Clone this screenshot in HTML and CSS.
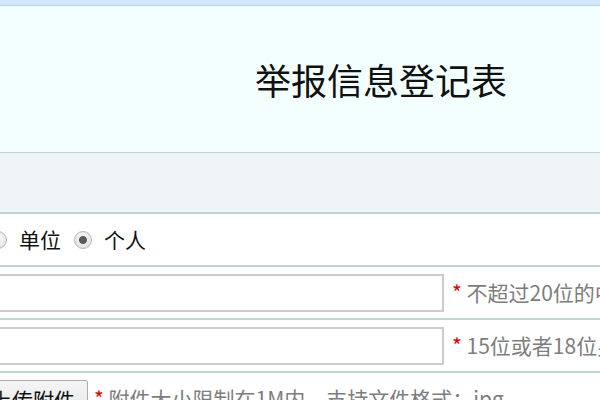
FILE: index.html
```html
<!DOCTYPE html>
<html lang="zh-CN">
<head>
<meta charset="utf-8">
<title>举报信息登记表</title>
<link rel="stylesheet" href="styles.css">
</head>
<body>
<div class="topbar"></div>
<header class="header">
  <h1 class="title">举报信息登记表</h1>
</header>
<div class="band"></div>
<form class="form">
  <div class="row">
    <div class="field radios">
      <label class="opt"><input type="radio" name="type" class="radio"><span>单位</span></label>
      <label class="opt"><input type="radio" name="type" class="radio" checked><span>个人</span></label>
    </div>
  </div>
  <div class="row">
    <div class="field">
      <input type="text" class="text">
      <span class="hint"><span class="star">*</span> 不超过20位的中文字符</span>
    </div>
  </div>
  <div class="row">
    <div class="field">
      <input type="text" class="text">
      <span class="hint"><span class="star">*</span> 15位或者18位身份证号码</span>
    </div>
  </div>
  <div class="row last">
    <div class="field">
      <button type="button" class="upload">上传附件</button>
      <span class="hint"><span class="star">*</span> 附件大小限制在1M内，支持文件格式：jpg</span>
    </div>
  </div>
</form>
</body>
</html>
```

FILE: styles.css
```css
html, body {
  margin: 0;
  padding: 0;
  width: 600px;
  height: 400px;
  overflow: hidden;
  background: #ffffff;
  font-family: "Noto Sans CJK SC", "Noto Sans", sans-serif;
}

.topbar {
  height: 5px;
  background: #d3e7fb;
  border-bottom: 1px solid #b1d4ee;
}

.header {
  height: 147px;
  background: #f3ffff;
  border-bottom: 1px solid #c2d2d4;
  display: flex;
  align-items: center;
  padding-left: 255px;
  box-sizing: border-box;
}

.title {
  margin: 0;
  font-size: 36px;
  font-weight: normal;
  color: #111111;
  line-height: 1;
  letter-spacing: 0;
}

.band {
  height: 59px;
  background: #eff4f7;
  border-bottom: 2px solid #bcd5d2;
}

.form {
  margin: 0;
}

.row {
  height: 51px;
  border-bottom: 2px solid #bdd6d2;
  display: flex;
  align-items: center;
  overflow: hidden;
  white-space: nowrap;
}

.row.last {
  height: 40px;
  align-items: flex-start;
  padding-top: 7px;
  border-bottom: none;
}

.field {
  display: flex;
  align-items: center;
  margin-left: -120px;
  font-size: 21px;
  color: #111111;
}

.radios {
  padding-left: 109px;
}

.opt {
  display: flex;
  align-items: center;
  margin-right: 13px;
}

.opt span {
  margin-left: 12px;
  line-height: 1;
}

.radio {
  appearance: none;
  -webkit-appearance: none;
  margin: 0;
  width: 18px;
  height: 18px;
  border: 1px solid #b9b9b9;
  border-radius: 50%;
  background: radial-gradient(circle at 50% 40%, #fbfbfb 0, #e4e4e4 70%, #d6d6d6 100%);
  box-sizing: border-box;
}

.radio:checked {
  background:
    radial-gradient(circle, #5a5a5a 0, #5a5a5a 3.6px, transparent 4.4px),
    radial-gradient(circle at 50% 40%, #fbfbfb 0, #e4e4e4 70%, #d6d6d6 100%);
}

.text {
  width: 564px;
  height: 38px;
  margin: 0;
  border: 2px solid #cccccc;
  box-sizing: border-box;
  background: #ffffff;
  font-size: 21px;
  padding: 0 6px;
}

.hint {
  margin-left: 8px;
  color: #7d7d7d;
  font-size: 21px;
  line-height: 1;
}

.star {
  color: #e00000;
}

.upload {
  margin: 0 0 0 98px;
  height: 38px;
  padding: 0 12px 0 12px;
  border: 1px solid #acacac;
  border-radius: 2px;
  background: linear-gradient(#f4f4f4, #e6e6e6);
  font-family: "Noto Sans CJK SC", "Noto Sans", sans-serif;
  font-size: 21px;
  color: #111111;
  line-height: 1;
  align-self: flex-start;
}

.last .hint {
  margin-left: 6px;
  align-self: flex-start;
  padding-top: 8px;
}
```
